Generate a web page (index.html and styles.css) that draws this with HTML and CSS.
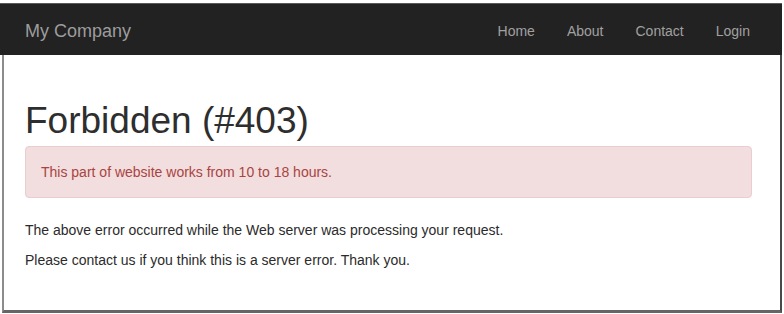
FILE: index.html
```html
<!DOCTYPE html>
<html lang="en">
<head>
  <meta charset="UTF-8">
  <meta name="viewport" content="width=device-width, initial-scale=1.0">
  <title>Forbidden (#403)</title>
  <link rel="stylesheet" href="styles.css">
</head>
<body>
  <div class="top-strip"></div>

  <!-- Barra de navegação -->
  <nav class="navbar">
    <a href="#" class="brand">My Company</a>
    <ul class="nav">
      <li><a href="#">Home</a></li>
      <li><a href="#">About</a></li>
      <li><a href="#">Contact</a></li>
      <li><a href="#">Login</a></li>
    </ul>
  </nav>

  <!-- Conteúdo -->
  <div class="page">
    <h1>Forbidden (#403)</h1>
    <div class="alert">This part of website works from 10 to 18 hours.</div>
    <p>The above error occurred while the Web server was processing your request.</p>
    <p>Please contact us if you think this is a server error. Thank you.</p>
  </div>
</body>
</html>
```

FILE: styles.css
```css
/* Estilo geral */
body {
  margin: 0;
  font-family: 'Liberation Sans', Arial, sans-serif;
  font-size: 14px;
  line-height: 20px;
  color: #2b2b2b;
  background: #fff;
  height: 314px;
  display: flex;
  flex-direction: column;
  overflow: hidden;
}

.top-strip {
  height: 3px;
  background: #fff;
}

/* Navbar */
.navbar {
  height: 51px;
  margin-right: 2px;
  background: #222;
  border-top: 1px solid #5a5a5a;
  display: flex;
  align-items: center;
  justify-content: space-between;
  padding: 2px 32px 0 25px;
  box-sizing: border-box;
  height: 52px;
}

.brand {
  color: #9d9d9d;
  font-size: 18px;
  text-decoration: none;
}

.nav {
  list-style: none;
  margin: 0;
  padding: 0;
  display: flex;
  gap: 32px;
}

.nav a {
  color: #a0a0a0;
  text-decoration: none;
}

/* Página */
.page {
  flex: 1;
  margin: 0 2px 1px 2px;
  border-left: 2px solid #8c8c8c;
  border-right: 2px solid #4a4a4a;
  border-bottom: 3px solid #666;
  padding: 0 28px 0 21px;
}

h1 {
  margin: 46px 0 4px;
  font-size: 37px;
  font-weight: normal;
  line-height: 1.1;
  color: #2e2e2e;
}

.alert {
  padding: 15px;
  background: #f2dede;
  border: 1px solid #ebccd1;
  border-radius: 4px;
  color: #a94442;
  margin-bottom: 22px;
}

p {
  margin: 0 0 10px;
}
```
